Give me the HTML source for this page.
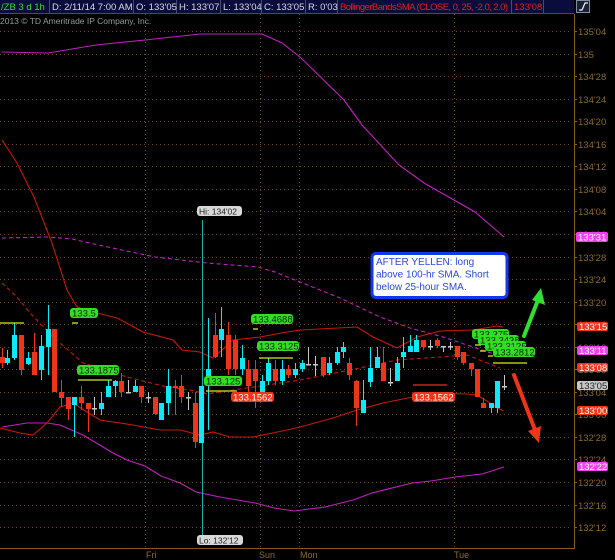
<!DOCTYPE html>
<html><head><meta charset="utf-8">
<style>
html,body{margin:0;padding:0;background:#000;width:615px;height:560px;overflow:hidden}
svg{display:block}
text{font-family:"Liberation Sans",sans-serif}
</style></head><body>
<svg id="s" width="615" height="560" xmlns="http://www.w3.org/2000/svg">
<rect width="615" height="560" fill="#000"/>
<g id="grid"></g>
<!-- header -->
<rect x="0" y="0" width="574" height="13" fill="#0a0c3c"/>
<line x1="0" y1="13.5" x2="574" y2="13.5" stroke="#5a4a20"/>
<g stroke="#4a4a70" stroke-width="1">
<line x1="49.5" y1="0" x2="49.5" y2="13"/><line x1="133.5" y1="0" x2="133.5" y2="13"/><line x1="176.5" y1="0" x2="176.5" y2="13"/><line x1="220.5" y1="0" x2="220.5" y2="13"/><line x1="261.5" y1="0" x2="261.5" y2="13"/><line x1="305.5" y1="0" x2="305.5" y2="13"/><line x1="337.5" y1="0" x2="337.5" y2="13"/><line x1="511.5" y1="0" x2="511.5" y2="13"/><line x1="543.5" y1="0" x2="543.5" y2="13"/>
</g>
<g font-size="9.5" fill="#d8d8e8">
<text x="1" y="10" fill="#2ee02e">/ZB 3 d 1h</text>
<text x="52" y="10">D: 2/11/14 7:00 AM</text>
<text x="136" y="10">O: 133'05</text>
<text x="179" y="10">H: 133'07</text>
<text x="223" y="10">L: 133'04</text>
<text x="264" y="10">C: 133'05</text>
<text x="308" y="10">R: 0'03</text>
<text x="340" y="10" fill="#e02020" textLength="168">BollingerBandsSMA (CLOSE, 0, 25, -2.0, 2.0)</text>
<text x="514" y="10" fill="#e02020">133'08</text>
</g>
<rect x="576.5" y="0.5" width="13" height="12" fill="#1a2030" stroke="#8090a0"/>
<path d="M579 10 H582 L585 3 H588" stroke="#e0f0ff" fill="none" stroke-width="1.3"/>
<text x="0" y="24" font-size="8.5" fill="#9a9a9a">2013 © TD Ameritrade IP Company, Inc.</text>
<!-- axis -->
<line x1="574.5" y1="14" x2="574.5" y2="549" stroke="#8a5a18"/>
<line x1="0" y1="548.5" x2="575" y2="548.5" stroke="#8a5a18"/>
<g font-size="9" fill="#8a6a30">
<text x="146" y="558">Fri</text><text x="259" y="558">Sun</text><text x="300" y="558">Mon</text><text x="454" y="558">Tue</text>
</g>
<g id="axis" font-size="9.5" fill="#8a6a30"></g>
<!-- bands -->
<g fill="none" stroke-width="1.1">
<polyline stroke="#c020c0" points="2,52 48,53 96,45 145,40 200,34 262,34 282,43 300,57 344,100 362,125 399,165 424,183 475,212 504,237"/>
<polyline stroke="#c020c0" points="2,427 27,423 47,423 60,425 83,435 113,453 127,460 145,466 161,476 180,483 196,492 220,497 255,503 274,508 294,511 325,507 353,500 372,493 412,483 431,481 455,477 482,474 504,467"/>
<polyline stroke="#c020c0" stroke-dasharray="4,3" points="2,238 48,237 72,239 103,246 155,257 207,263 258,267 275,272 300,282 340,298 380,317 410,328 443,337 473,347 500,356"/>
<polyline stroke="#c81808" points="2,140 17,163 34,197 52,243 67,290 77,307 97,313 117,318 143,332 173,340 182,350 200,352 213,358 233,340 260,337 287,332 300,330 357,327 373,337 397,348 417,337 440,331 473,330 497,326 503,327"/>
<polyline stroke="#c81808" points="0,428 20,433 33,435 47,423 60,407 73,403 87,412 100,420 133,425 160,430 180,430 200,435 213,432 230,437 253,437 287,430 300,427 333,418 357,410 383,403 413,397 433,393 467,394 477,395 503,411"/>
<polyline stroke="#c81808" stroke-dasharray="4,3" points="2,283 17,297 30,313 53,337 83,363 127,377 167,387 190,390 207,394 233,390 267,385 300,380 350,370 397,360 440,357 467,355 500,368"/>
</g>
<!-- hi/lo teal line -->
<line x1="202.5" y1="220" x2="202.5" y2="537" stroke="#18b0b8" stroke-width="1"/>
<g id="candles"></g>
<!-- hi lo labels -->
<rect x="197" y="206" width="45" height="10" rx="3" fill="#d8d8d8"/>
<text x="199" y="214.5" font-size="8.5" fill="#222">Hi: 134'02</text>
<rect x="197" y="535" width="46" height="10" rx="3" fill="#d8d8d8"/>
<text x="199" y="543.5" font-size="8.5" fill="#222">Lo: 132'12</text>
<!-- yellow lines -->
<g stroke="#d8e820" stroke-width="1.3">
<line x1="0" y1="323" x2="24" y2="323"/><line x1="72" y1="323" x2="78" y2="323"/>
<line x1="78" y1="380" x2="112" y2="380"/>
<line x1="253" y1="329" x2="258" y2="329"/>
<line x1="259" y1="358" x2="293" y2="358"/>
<line x1="206" y1="391" x2="237" y2="391"/>
<line x1="493" y1="363" x2="527" y2="363"/>
<line x1="475" y1="345" x2="481" y2="345"/><line x1="480" y1="351" x2="486" y2="351"/><line x1="488" y1="356" x2="493" y2="356"/>
</g>
<line x1="413" y1="385" x2="447" y2="385" stroke="#e83020" stroke-width="1.2"/>
<!-- green labels -->
<g font-size="9.5" fill="#102010">
<rect x="70" y="308" width="28" height="10" rx="3" fill="#30e020"/><text x="72" y="316.5">133.5</text>
<rect x="77" y="365" width="42" height="10" rx="3" fill="#30e020"/><text x="79" y="373.5">133.1875</text>
<rect x="251" y="314" width="42" height="10" rx="3" fill="#30e020"/><text x="253" y="322.5">133.4688</text>
<rect x="257" y="341" width="42" height="10" rx="3" fill="#30e020"/><text x="259" y="349.5">133.3125</text>
<rect x="204" y="376" width="38" height="10" rx="3" fill="#30e020"/><text x="206" y="384.5">133.125</text>
<rect x="472" y="329" width="37" height="10" rx="3" fill="#30e020"/><text x="474" y="337.5">133.375</text>
<rect x="478" y="335" width="41" height="10" rx="3" fill="#30e020"/><text x="480" y="343.5">133.3438</text>
<rect x="485" y="341" width="41" height="10" rx="3" fill="#30e020"/><text x="487" y="349.5">133.3125</text>
<rect x="493" y="347" width="42" height="10" rx="3" fill="#30e020"/><text x="495" y="355.5">133.2812</text>
</g>
<g font-size="9.5" fill="#fff">
<rect x="231" y="392" width="43" height="10" rx="3" fill="#f03418"/><text x="233" y="400.5">133.1562</text>
<rect x="412" y="392" width="43" height="10" rx="3" fill="#f03418"/><text x="414" y="400.5">133.1562</text>
</g>
<!-- price tags -->
<g font-size="9.5">
<rect x="576" y="232" width="32" height="10" rx="2" fill="#f040f0"/><text x="578" y="240.5" fill="#fff">133'31</text>
<rect x="577" y="322" width="31" height="9" rx="2" fill="#f03418"/><text x="579" y="330" fill="#fff">133'15</text>
<rect x="577" y="346" width="31" height="9" rx="2" fill="#f040f0"/><text x="579" y="354" fill="#fff">133'11</text>
<rect x="577" y="363" width="31" height="9" rx="2" fill="#f03418"/><text x="579" y="371" fill="#fff">133'08</text>
<rect x="577" y="381" width="31" height="9" rx="2" fill="#c8c8c8"/><text x="579" y="389" fill="#222">133'05</text>
<rect x="577" y="406" width="31" height="9" rx="2" fill="#f03418"/><text x="579" y="414" fill="#fff">133'00</text>
<rect x="577" y="462" width="31" height="9" rx="2" fill="#f040f0"/><text x="579" y="470" fill="#fff">132'22</text>
</g>
<!-- callout -->
<rect x="372" y="253.5" width="135" height="44" rx="4" fill="#fff" stroke="#1438f0" stroke-width="3"/>
<g font-size="10" fill="#2848e0">
<text x="376" y="265">AFTER YELLEN: long</text>
<text x="376" y="277.5">above 100-hr SMA. Short</text>
<text x="376" y="290">below 25-hour SMA.</text>
</g>
<!-- arrows -->
<line x1="524" y1="336" x2="538" y2="300" stroke="#30e030" stroke-width="4" stroke-linecap="round"/>
<polygon points="541,288 545,305 532,300" fill="#30e030"/>
<line x1="514" y1="375" x2="535" y2="430" stroke="#f03418" stroke-width="4" stroke-linecap="round"/>
<polygon points="539,443 541,426 528,431" fill="#f03418"/>
</svg>
<script>
var NS="http://www.w3.org/2000/svg";
function el(p,t,a,txt){var e=document.createElementNS(NS,t);for(var k in a)e.setAttribute(k,a[k]);if(txt)e.textContent=txt;p.appendChild(e);return e;}
var grid=document.getElementById('grid'),axis=document.getElementById('axis');
var labels=["135'04","135","134'28","134'24","134'20","134'16","134'12","134'08","134'04","134'00","133'28","133'24","133'20","133'16","133'12","133'08","133'04","133'00","132'28","132'24","132'20","132'16","132'12"];
for(var i=0;i<labels.length;i++){var y=Math.round(31+i*22.55)+0.5;
el(grid,'line',{x1:0,y1:y,x2:572,y2:y,stroke:'#6a4a14','stroke-dasharray':'1,3'});
el(axis,'line',{x1:574,y1:y,x2:577,y2:y,stroke:'#8a5a18'});
el(axis,'text',{x:578,y:y+3.5},labels[i]);}
[145,260,299,454].forEach(function(x){el(grid,'line',{x1:x+.5,y1:14,x2:x+.5,y2:548,stroke:'#6a4a14','stroke-dasharray':'1,3'});});
var R='#f03418',C='#10e8f8',W='#c8c8c8';
var d=[
[2,357,363,348,368,R],[7,358,363,350,365,C],[14,335,358,323,360,C],[21,335,370,335,375,R],[28,358,364,352,365,C],[34,352,375,333,375,R],[41,346,370,335,380,C],[48,329,347,305,375,C],[54,329,392,329,392,R],[61,392,398,380,407,R],[68,397,409,397,420,R],[74,397,405,397,437,C],[81,397,403,386,410,R],[88,403,409,403,432,R],[94,408,409,397,415,W],[101,403,409,392,415,C],[108,386,397,380,397,C],[115,381,386,380,397,C],[121,381,392,373,397,R],[128,392,393,380,392,W],[135,386,392,380,392,C],[141,386,397,386,403,R],[148,397,398,392,403,W],[155,397,414,397,415,R],[161,403,420,403,420,C],[168,386,403,369,415,C],[175,386,388,380,415,R],[181,386,397,375,403,R],[188,397,398,392,410,W],[195,403,442,392,448,R],[201,386,443,386,443,C],[208,369,386,318,430,C],[215,335,357,313,358,R],[221,329,340,307,357,C],[228,335,369,322,375,R],[235,340,369,335,375,R],[242,358,369,345,375,C],[248,369,386,360,392,R],[255,369,381,360,408,R],[262,381,392,375,395,C],[268,363,381,358,385,C],[275,369,381,360,385,R],[282,369,381,360,385,C],[288,369,375,365,378,R],[295,369,375,363,378,C],[302,363,369,360,372,C],[308,364,365,347,364,W],[315,364,365,356,376,W],[323,357,375,357,377,R],[329,363,373,357,375,C],[337,352,363,347,365,C],[343,347,352,342,358,C],[349,363,375,358,380,R],[356,381,408,380,426,R],[363,400,413,380,413,C],[370,368,382,347,387,C],[377,357,368,347,368,C],[383,363,381,347,381,R],[390,382,383,368,386,W],[397,363,381,357,381,C],[403,352,357,337,368,C],[410,346,352,335,352,C],[416,340,352,335,352,C],[423,340,347,340,350,R],[430,346,347,340,350,W],[437,340,346,338,348,R],[443,346,347,346,352,W],[450,346,347,342,350,W],[457,346,357,346,360,R],[463,352,363,352,365,R],[471,363,369,363,376,R],[477,369,397,369,397,R],[483,403,408,398,408,R],[491,403,408,403,413,C],[497,381,408,381,413,C],[504,386,387,375,390,W]];
var cg=document.getElementById('candles');
d.forEach(function(c){var x=c[0];
el(cg,'line',{x1:x+.5,y1:c[3],x2:x+.5,y2:c[4],stroke:c[5],'stroke-width':1});
var h=Math.max(1.5,c[2]-c[1]);el(cg,'rect',{x:x-2,y:c[1],width:5,height:h,fill:c[5]});
if(c[5]==W)el(cg,'line',{x1:x-2,y1:c[1]+.5,x2:x+3,y2:c[1]+.5,stroke:W});});
</script>
</body></html>
